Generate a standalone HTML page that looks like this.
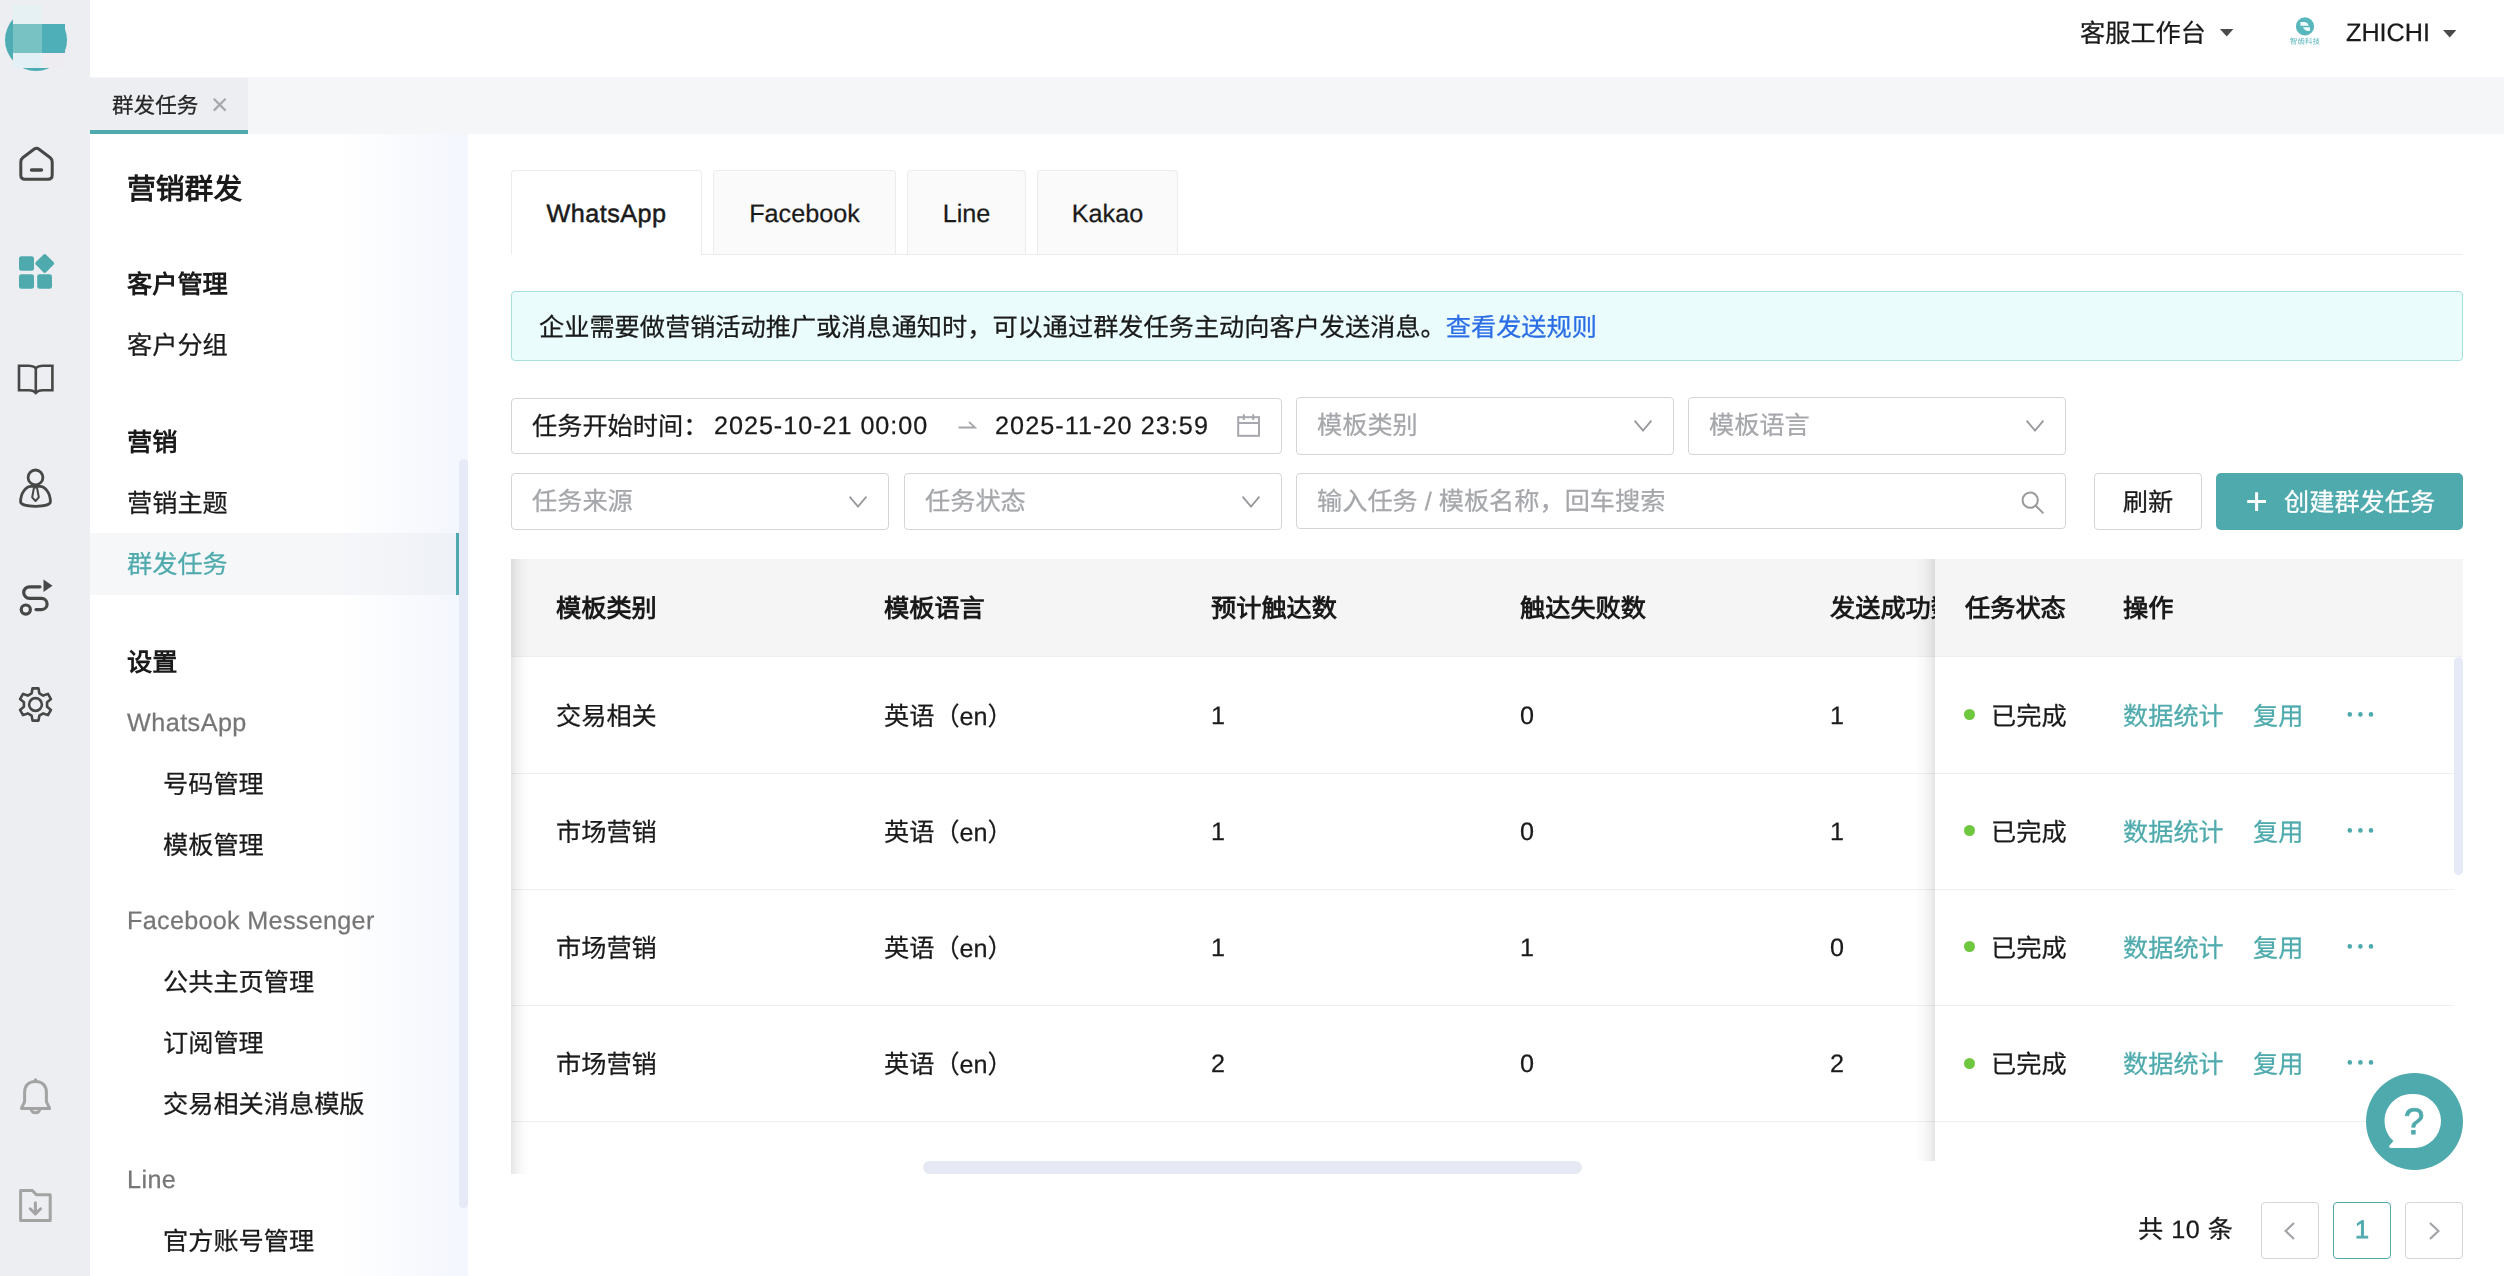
<!DOCTYPE html>
<html lang="zh-CN">
<head>
<meta charset="utf-8">
<title>群发任务</title>
<style>
*{box-sizing:border-box;margin:0;padding:0}
html,body{width:2504px;height:1276px;overflow:hidden;background:#fff}
body{font-family:"Liberation Sans",sans-serif;font-size:25.2px;color:#1a1a1a;position:relative;text-rendering:geometricPrecision}
.abs{position:absolute}
.t,.tab span{will-change:transform;-webkit-text-stroke-width:0.25px}
.t.h,.t.th{-webkit-text-stroke-width:0}
.t{position:absolute;white-space:nowrap;line-height:36px;height:36px}
/* icon bar */
#iconbar{left:0;top:0;width:90px;height:1276px;background:#edeef2}
#iconbar svg{position:absolute;overflow:visible}
/* header */
#header{left:90px;top:0;width:2414px;height:77px;background:#fff}
#tabbar{left:90px;top:77px;width:2414px;height:57px;background:#f5f6f8}
#tabactive{left:0;top:0;width:158px;height:57px;background:#edeef2;border-bottom:4px solid #4faaad}
/* sidebar */
#sidebar{left:90px;top:134px;width:378px;height:1142px;background:linear-gradient(to right,#fff 0%,#fff 66%,#f3f6fd 100%)}
#sidebar .t{left:37px}
#sidebar .t.sub{left:73px}
#sidebar .h{font-weight:bold;color:#1a1a1a}
#sidebar .g{color:#767676;letter-spacing:0.4px;margin-top:-1px}
#sbactive{left:0;top:399px;width:369px;height:62px;background:linear-gradient(to right,#f6f7f9 0%,#f6f7f9 66%,#eef1f7 100%);border-right:3px solid #4faaad}
#sbscroll{left:369px;top:325px;width:9px;height:749px;background:#e6eaf6;border-radius:5px}
/* main */
#main{left:468px;top:134px;width:2036px;height:1142px;background:#fff}
.tab{position:absolute;top:36px;height:84px;border:1px solid #ececec;border-bottom:none;border-radius:4px 4px 0 0;background:#fafafa;text-align:center;line-height:86px;font-size:25.2px;color:#1a1a1a}
.box{position:absolute;border:1px solid #d4d5d9;border-radius:4px;background:#fff}
.ph{color:#a5a7ab}
.teal{color:#4faaad}
</style>
</head>
<body>
<div id="iconbar" class="abs">
<!-- logo -->
<div class="abs" style="left:5px;top:9px;width:62px;height:62px;border-radius:50%;background:#4eadb2"></div>
<div class="abs" style="left:13px;top:5px;width:29px;height:19px;background:#e6f1f3"></div>
<div class="abs" style="left:42px;top:5px;width:23px;height:19px;background:#edeef2"></div>
<div class="abs" style="left:13px;top:24px;width:29px;height:29px;background:#78c2c4"></div>
<div class="abs" style="left:42px;top:24px;width:23px;height:29px;background:#4fafb8"></div>
<div class="abs" style="left:13px;top:53px;width:29px;height:15px;background:#e3f0f5"></div>
<div class="abs" style="left:42px;top:53px;width:23px;height:15px;background:#eeecf0"></div>
<!-- home -->
<svg style="left:0;top:130px" width="90" height="70" viewBox="0 0 90 70" fill="none" stroke="#474747" stroke-width="3" stroke-linecap="round" stroke-linejoin="round">
<path d="M23 27.5 L34.3 19 Q36.5 17.4 38.7 19 L50 27.5 Q52.2 29.2 52.2 32 V45 Q52.2 49.3 48 49.3 H25 Q20.8 49.3 20.8 45 V32 Q20.8 29.2 23 27.5 Z"/>
<path d="M31.5 40 H41.5" stroke-width="3.4"/>
</svg>
<!-- apps -->
<svg style="left:0;top:240px" width="90" height="70" viewBox="0 0 90 70" fill="#4faaad">
<rect x="19" y="16.2" width="15" height="14.6" rx="2.4"/>
<rect x="19" y="34.2" width="15" height="14.6" rx="2.4"/>
<rect x="37.2" y="34.2" width="14.8" height="14.6" rx="2.4"/>
<rect x="37.5" y="16.2" width="14.4" height="14.4" rx="2" transform="rotate(45 44.7 23.4)"/>
</svg>
<!-- book -->
<svg style="left:0;top:345px" width="90" height="70" viewBox="0 0 90 70" fill="none" stroke="#474747" stroke-width="2.6" stroke-linejoin="miter">
<path d="M35.8 48 Q33.5 45.2 29 45.2 H19 V20.8 H29 Q33.5 20.8 35.8 23 Q38.1 20.8 42.6 20.8 H52.4 V45.2 H42.6 Q38.1 45.2 35.8 48 Z"/>
<path d="M35.8 23 V47"/>
</svg>
<!-- person -->
<svg style="left:0;top:455px" width="90" height="70" viewBox="0 0 90 70" fill="none" stroke="#474747" stroke-width="2.8" stroke-linejoin="round">
<circle cx="35.5" cy="22.4" r="7.4"/>
<path d="M20.6 46.8 C20.6 38 26 31.4 31 31.4 H40 C45 31.4 50.4 38 50.4 46.8 C50.4 49.6 44 51.3 35.5 51.3 C27 51.3 20.6 49.6 20.6 46.8 Z"/>
<path d="M34 32.5 H37 L38.8 42.3 L35.5 46 L32.2 42.3 Z" stroke-width="2"/>
</svg>
<!-- route -->
<svg style="left:0;top:565px" width="90" height="70" viewBox="0 0 90 70" fill="none" stroke="#474747" stroke-width="3.2" stroke-linecap="round" stroke-linejoin="round">
<path d="M40 21.8 H29.5 A5.8 5.8 0 0 0 29.5 33.4 H41.5 A5.6 5.6 0 0 1 41.5 44.6 H36"/>
<circle cx="25.8" cy="44.6" r="4.6"/>
<path d="M43.5 14.5 L52.5 20.8 L43.5 27 Z" fill="#474747" stroke="none"/>
</svg>
<!-- gear -->
<svg style="left:0;top:670px" width="90" height="70" viewBox="0 0 90 70" fill="none" stroke="#474747" stroke-width="2.6" stroke-linejoin="round">
<g transform="translate(35.5 34.5)">
<path d="M3.84 -11.16 L2.99 -16.13 L-2.99 -16.13 L-3.84 -11.16 L-7.74 -8.91 L-12.47 -10.65 L-15.46 -5.47 L-11.58 -2.25 L-11.58 2.25 L-15.46 5.47 L-12.47 10.65 L-7.74 8.91 L-3.84 11.16 L-2.99 16.13 L2.99 16.13 L3.84 11.16 L7.74 8.91 L12.47 10.65 L15.46 5.47 L11.58 2.25 L11.58 -2.25 L15.46 -5.47 L12.47 -10.65 L7.74 -8.91 Z"/>
<circle cx="0" cy="0" r="6.4"/>
</g>
</svg>
<!-- bell -->
<svg style="left:0;top:1066px" width="90" height="70" viewBox="0 0 90 70" fill="none" stroke="#a3a3a3" stroke-width="3" stroke-linejoin="round" stroke-linecap="round">
<path d="M35.5 15.4 C28.2 15.4 24.6 20.2 24.6 26.8 V35.6 L21.4 42.4 H49.6 L46.4 35.6 V26.8 C46.4 20.2 42.8 15.4 35.5 15.4 Z"/>
<path d="M31.2 43.6 A4.5 4.5 0 0 0 39.8 43.6"/>
<path d="M35.5 14 V15" stroke-width="3.4"/>
</svg>
<!-- folder download -->
<svg style="left:0;top:1170px" width="90" height="70" viewBox="0 0 90 70" fill="none" stroke="#a3a3a3" stroke-width="3" stroke-linejoin="round" stroke-linecap="round">
<path d="M20.6 20.4 H32.4 L36.4 24.8 H50.2 V50.6 H20.6 Z"/>
<path d="M35.4 32.8 V43.6 M30.2 38.8 L35.4 44 L40.6 38.8"/>
</svg>
</div>
<div id="header" class="abs">
<div class="t" id="h1" style="left:1990px;top:16px">客服工作台</div>
<svg class="abs" style="left:2129px;top:28px" width="16" height="10" viewBox="0 0 16 10"><path d="M1 1 H14.4 L7.7 8.6 Z" fill="#4a4a4a"/></svg>
<svg class="abs" style="left:2198px;top:14px;will-change:transform" width="36" height="34" viewBox="0 0 36 34">
<circle cx="17" cy="12.4" r="9.1" fill="#58b6bd"/>
<path d="M12.4 8 H16.5 Q20.2 8.4 20.6 11.8 H12.4 Z M14.9 13.2 H22 V16.8 Q16.8 17.4 14.9 13.2 Z" fill="#f2fbfc"/>
<text x="17" y="30.2" font-size="7.6" fill="#58b6bd" text-anchor="middle" font-family="Liberation Sans, sans-serif" textLength="30" lengthAdjust="spacingAndGlyphs">智齿科技</text>
</svg>
<div class="t" id="h2" style="left:2256px;top:15px">ZHICHI</div>
<svg class="abs" style="left:2352px;top:29px" width="16" height="10" viewBox="0 0 16 10"><path d="M1 1 H14.4 L7.7 8.6 Z" fill="#4a4a4a"/></svg>
</div>
<div id="tabbar" class="abs"><div id="tabactive" class="abs"></div><div class="abs" style="left:0;top:0;width:2414px;height:1px;background:#f4f6fb"></div>
<div class="t" id="tb1" style="left:22px;top:11px;font-size:21.6px;color:#262626">群发任务</div>
<svg class="abs" style="left:122px;top:20px" width="16" height="16" viewBox="0 0 16 16"><path d="M1.8 1.8 L13.6 13.6 M13.6 1.8 L1.8 13.6" stroke="#a8a9ad" stroke-width="2.3" fill="none"/></svg>
</div>
<div id="sidebar" class="abs">
<div id="sbactive" class="abs"></div>
<div id="sbscroll" class="abs"></div>
<div class="t h big" id="sb0" style="top:38px;font-size:28.8px">营销群发</div>
<div class="t h" id="sb1" style="top:133px">客户管理</div>
<div class="t " id="sb2" style="top:194px">客户分组</div>
<div class="t h" id="sb3" style="top:291px">营销</div>
<div class="t " id="sb4" style="top:352px">营销主题</div>
<div class="t teal" id="sb5" style="top:413px">群发任务</div>
<div class="t h" id="sb6" style="top:511px">设置</div>
<div class="t g" id="sb7" style="letter-spacing:0.45px;top:572px">WhatsApp</div>
<div class="t sub" id="sb8" style="top:633px">号码管理</div>
<div class="t sub" id="sb9" style="top:694px">模板管理</div>
<div class="t g" id="sb10" style="letter-spacing:0.3px;top:770px">Facebook Messenger</div>
<div class="t sub" id="sb11" style="top:831px">公共主页管理</div>
<div class="t sub" id="sb12" style="top:892px">订阅管理</div>
<div class="t sub" id="sb13" style="top:953px">交易相关消息模版</div>
<div class="t g" id="sb14" style="top:1029px">Line</div>
<div class="t sub" id="sb15" style="top:1090px">官方账号管理</div>
</div>
<div id="main" class="abs">
<!-- tabs -->
<div class="tab" style="left:245px;width:183px"><span id="tabt2">Facebook</span></div>
<div class="tab" style="left:439px;width:119px"><span id="tabt3">Line</span></div>
<div class="tab" style="left:569px;width:141px"><span id="tabt4">Kakao</span></div>
<div class="abs" style="left:43px;top:120px;width:1952px;height:1px;background:#ececec"></div>
<div class="tab" style="left:43px;width:191px;background:#fff;height:85px;z-index:2" id="tab1"><span id="tabt1" style="font-weight:normal;-webkit-text-stroke:0.5px #1a1a1a;letter-spacing:0.45px">WhatsApp</span></div>
<!-- alert -->
<div class="abs" style="left:43px;top:157px;width:1952px;height:70px;border:1px solid #a6e0df;border-radius:4px;background:#eafcfb"></div>
<div class="t" id="alert" style="left:71.2px;top:175.5px">企业需要做营销活动推广或消息通知时，可以通过群发任务主动向客户发送消息。<span style="color:#2b6de5">查看发送规则</span></div>
<!-- filters row1 -->
<div class="box" style="left:43px;top:264px;width:771px;height:56px"></div>
<div class="t" id="f_lbl" style="left:64px;top:275px">任务开始时间：</div>
<div class="t" id="f_d1" style="letter-spacing:0.96px;left:246px;top:274px">2025-10-21 00:00</div>
<svg class="abs" style="left:488px;top:284px" width="22" height="14" viewBox="0 0 22 14"><path d="M2.5 9.5 H19 L13 3.8" stroke="#a3a5aa" stroke-width="1.8" fill="none"/></svg>
<div class="t" id="f_d2" style="letter-spacing:1.06px;left:527px;top:274px">2025-11-20 23:59</div>
<svg class="abs" style="left:768px;top:279px" width="26" height="26" viewBox="0 0 26 26" fill="none" stroke="#a6a8ad" stroke-width="2"><rect x="2.2" y="4.2" width="20.8" height="18.6"/><path d="M2.2 10 H23 M7.8 1.2 V7 M17.2 1.2 V7"/></svg>
<div class="box" style="left:828px;top:263px;width:378px;height:58px"></div>
<div class="t ph" id="f_s1" style="left:849px;top:274px">模板类别</div>
<svg class="abs" style="left:1165px;top:285px" width="20" height="14" viewBox="0 0 20 14"><path d="M1.6 1.6 L10 11.6 L18.4 1.6" stroke="#97999d" stroke-width="1.8" fill="none"/></svg>
<div class="box" style="left:1220px;top:263px;width:378px;height:58px"></div>
<div class="t ph" id="f_s2" style="left:1241px;top:274px">模板语言</div>
<svg class="abs" style="left:1557px;top:285px" width="20" height="14" viewBox="0 0 20 14"><path d="M1.6 1.6 L10 11.6 L18.4 1.6" stroke="#97999d" stroke-width="1.8" fill="none"/></svg>
<!-- filters row2 -->
<div class="box" style="left:43px;top:339px;width:378px;height:57px"></div>
<div class="t ph" id="f_s3" style="left:64px;top:350px">任务来源</div>
<svg class="abs" style="left:380px;top:361px" width="20" height="14" viewBox="0 0 20 14"><path d="M1.6 1.6 L10 11.6 L18.4 1.6" stroke="#97999d" stroke-width="1.8" fill="none"/></svg>
<div class="box" style="left:436px;top:339px;width:378px;height:57px"></div>
<div class="t ph" id="f_s4" style="left:457px;top:350px">任务状态</div>
<svg class="abs" style="left:773px;top:361px" width="20" height="14" viewBox="0 0 20 14"><path d="M1.6 1.6 L10 11.6 L18.4 1.6" stroke="#97999d" stroke-width="1.8" fill="none"/></svg>
<div class="box" style="left:828px;top:339px;width:770px;height:56px"></div>
<div class="t ph" id="f_s5" style="left:849px;top:350px">输入任务 / 模板名称，回车搜索</div>
<svg class="abs" style="left:1552px;top:356px" width="26" height="26" viewBox="0 0 26 26" fill="none" stroke="#9a9a9a" stroke-width="2"><circle cx="10.2" cy="10.2" r="7.6"/><path d="M15.8 15.8 L23.4 23.4"/></svg>
<div class="box" style="left:1626px;top:339px;width:108px;height:57px"></div>
<div class="t" id="b_ref" style="left:1626px;width:108px;text-align:center;top:351px">刷新</div>
<div class="abs" style="left:1748px;top:339px;width:247px;height:57px;background:#4faaad;border-radius:5px"></div>
<svg class="abs" style="left:1778px;top:357px" width="22" height="22" viewBox="0 0 22 22"><path d="M10.6 1.2 V20 M1.2 10.6 H20" stroke="#fff" stroke-width="3" fill="none"/></svg>
<div class="t" id="b_new" style="left:1816px;top:351px;color:#fff">创建群发任务</div>
<!-- table -->
<div class="abs" id="thead" style="left:43px;top:425px;width:1952px;height:97px;background:#f5f5f5"></div>
<div class="abs" style="left:43px;top:522px;width:1952px;height:1px;background:#eeeeee"></div>
<div class="abs" style="left:43px;top:639px;width:1943px;height:1px;background:#efefef"></div>
<div class="abs" style="left:43px;top:755px;width:1943px;height:1px;background:#efefef"></div>
<div class="abs" style="left:43px;top:871px;width:1943px;height:1px;background:#efefef"></div>
<div class="abs" style="left:43px;top:987px;width:1943px;height:1px;background:#efefef"></div>
<div class="t th" id="th0" style="left:88px;top:457px;font-weight:bold">模板类别</div>
<div class="t th" id="th1" style="left:415.5px;top:457px;font-weight:bold">模板语言</div>
<div class="t th" id="th2" style="left:743px;top:457px;font-weight:bold">预计触达数</div>
<div class="t th" id="th3" style="left:1052px;top:457px;font-weight:bold">触达失败数</div>
<div class="t th" id="th4" style="left:1362px;top:457px;font-weight:bold">发送成功数</div>
<div class="t" id="r0a" style="left:88px;top:565px">交易相关</div>
<div class="t" id="r0b" style="left:415.5px;top:565px">英语（en）</div>
<div class="t" id="r0c" style="left:743px;top:564px">1</div>
<div class="t" id="r0d" style="left:1052px;top:564px">0</div>
<div class="t" id="r0e" style="left:1362px;top:564px">1</div>
<div class="t" id="r1a" style="left:88px;top:681px">市场营销</div>
<div class="t" id="r1b" style="left:415.5px;top:681px">英语（en）</div>
<div class="t" id="r1c" style="left:743px;top:680px">1</div>
<div class="t" id="r1d" style="left:1052px;top:680px">0</div>
<div class="t" id="r1e" style="left:1362px;top:680px">1</div>
<div class="t" id="r2a" style="left:88px;top:797px">市场营销</div>
<div class="t" id="r2b" style="left:415.5px;top:797px">英语（en）</div>
<div class="t" id="r2c" style="left:743px;top:796px">1</div>
<div class="t" id="r2d" style="left:1052px;top:796px">1</div>
<div class="t" id="r2e" style="left:1362px;top:796px">0</div>
<div class="t" id="r3a" style="left:88px;top:913px">市场营销</div>
<div class="t" id="r3b" style="left:415.5px;top:913px">英语（en）</div>
<div class="t" id="r3c" style="left:743px;top:912px">2</div>
<div class="t" id="r3d" style="left:1052px;top:912px">0</div>
<div class="t" id="r3e" style="left:1362px;top:912px">2</div>
<div class="abs" style="left:455px;top:1027px;width:659px;height:13px;border-radius:7px;background:#e6e9f4"></div>
<div class="abs" style="left:43px;top:425px;width:18px;height:615px;background:linear-gradient(to right,rgba(0,0,0,0.10),rgba(0,0,0,0.055) 30%,rgba(0,0,0,0.02) 62%,rgba(0,0,0,0))"></div>
<div class="abs" style="left:1447px;top:425px;width:20px;height:602px;background:linear-gradient(to left,rgba(0,0,0,0.10),rgba(0,0,0,0.05) 30%,rgba(0,0,0,0.018) 62%,rgba(0,0,0,0))"></div>
<div class="abs" style="left:1467px;top:425px;width:528px;height:97px;background:#f5f5f5"></div>
<div class="abs" style="left:1467px;top:522px;width:528px;height:1px;background:#eeeeee"></div>
<div class="abs" style="left:1467px;top:523px;width:528px;height:504px;background:#fff"></div>
<div class="abs" style="left:1467px;top:639px;width:519px;height:1px;background:#efefef"></div>
<div class="abs" style="left:1467px;top:755px;width:519px;height:1px;background:#efefef"></div>
<div class="abs" style="left:1467px;top:871px;width:519px;height:1px;background:#efefef"></div>
<div class="abs" style="left:1467px;top:987px;width:519px;height:1px;background:#efefef"></div>
<div class="t th" id="th5" style="left:1497px;top:457px;font-weight:bold">任务状态</div>
<div class="t th" id="th6" style="left:1655px;top:457px;font-weight:bold">操作</div>
<div class="abs" style="left:1496px;top:575px;width:11px;height:11px;border-radius:50%;background:#6fc63f"></div>
<div class="t" id="r0s" style="left:1523px;top:565px">已完成</div>
<div class="t teal" id="r0o1" style="left:1655px;top:565px">数据统计</div>
<div class="t teal" id="r0o2" style="left:1785px;top:565px">复用</div>
<svg class="abs" style="left:1878px;top:577px" width="30" height="8" viewBox="0 0 30 8"><circle cx="3.8" cy="3.4" r="2.3" fill="#4faaad"/><circle cx="14.4" cy="3.4" r="2.3" fill="#4faaad"/><circle cx="25" cy="3.4" r="2.3" fill="#4faaad"/></svg>
<div class="abs" style="left:1496px;top:691px;width:11px;height:11px;border-radius:50%;background:#6fc63f"></div>
<div class="t" id="r1s" style="left:1523px;top:681px">已完成</div>
<div class="t teal" id="r1o1" style="left:1655px;top:681px">数据统计</div>
<div class="t teal" id="r1o2" style="left:1785px;top:681px">复用</div>
<svg class="abs" style="left:1878px;top:693px" width="30" height="8" viewBox="0 0 30 8"><circle cx="3.8" cy="3.4" r="2.3" fill="#4faaad"/><circle cx="14.4" cy="3.4" r="2.3" fill="#4faaad"/><circle cx="25" cy="3.4" r="2.3" fill="#4faaad"/></svg>
<div class="abs" style="left:1496px;top:807px;width:11px;height:11px;border-radius:50%;background:#6fc63f"></div>
<div class="t" id="r2s" style="left:1523px;top:797px">已完成</div>
<div class="t teal" id="r2o1" style="left:1655px;top:797px">数据统计</div>
<div class="t teal" id="r2o2" style="left:1785px;top:797px">复用</div>
<svg class="abs" style="left:1878px;top:809px" width="30" height="8" viewBox="0 0 30 8"><circle cx="3.8" cy="3.4" r="2.3" fill="#4faaad"/><circle cx="14.4" cy="3.4" r="2.3" fill="#4faaad"/><circle cx="25" cy="3.4" r="2.3" fill="#4faaad"/></svg>
<div class="abs" style="left:1496px;top:924px;width:11px;height:11px;border-radius:50%;background:#6fc63f"></div>
<div class="t" id="r3s" style="left:1523px;top:913px">已完成</div>
<div class="t teal" id="r3o1" style="left:1655px;top:913px">数据统计</div>
<div class="t teal" id="r3o2" style="left:1785px;top:913px">复用</div>
<svg class="abs" style="left:1878px;top:925px" width="30" height="8" viewBox="0 0 30 8"><circle cx="3.8" cy="3.4" r="2.3" fill="#4faaad"/><circle cx="14.4" cy="3.4" r="2.3" fill="#4faaad"/><circle cx="25" cy="3.4" r="2.3" fill="#4faaad"/></svg>
<div class="abs" style="left:1986px;top:523px;width:9px;height:218px;border-radius:5px;background:#e6eaf6"></div>
<div class="t" id="pg_t" style="letter-spacing:0.5px;left:1670px;top:1078px">共 10 条</div>
<div class="box" style="left:1793px;top:1068px;width:58px;height:57px;border-color:#d4d5d9"></div>
<div class="box" style="left:1865px;top:1068px;width:58px;height:57px;border-color:#4faaad"></div>
<div class="box" style="left:1937px;top:1068px;width:58px;height:57px;border-color:#d4d5d9"></div>
<svg class="abs" style="left:1815px;top:1085px" width="14" height="24" viewBox="0 0 14 24"><path d="M11 4 L2.6 12 L11 20" stroke="#a2a4a8" stroke-width="2.2" fill="none"/></svg>
<svg class="abs" style="left:1960px;top:1085px" width="14" height="24" viewBox="0 0 14 24"><path d="M2 4 L10.4 12 L2 20" stroke="#a2a4a8" stroke-width="2.2" fill="none"/></svg>
<div class="t teal" id="pg_1" style="left:1865px;width:58px;text-align:center;top:1078px;-webkit-text-stroke:0.8px #4faaad">1</div>
<svg class="abs" style="left:1898px;top:939px;will-change:transform" width="97" height="97" viewBox="0 0 97 97">
<circle cx="48.5" cy="48.5" r="48.5" fill="#4faaad"/>
<path d="M48 21 A27 27 0 1 1 48 75 H25.5 Q22 75 23.5 72.6 L27.5 68 A27 27 0 0 1 48 21 Z" fill="#fff"/>
<text x="48" y="61" font-size="37" fill="#4faaad" stroke="#4faaad" stroke-width="0.8" text-anchor="middle" font-family="Liberation Sans, sans-serif">?</text>
</svg>

</div>
<script>(function(){var w=window.innerWidth;if(w&&Math.abs(w-2504)>1){document.documentElement.style.zoom=w/2504;}})();</script>
</body>
</html>
